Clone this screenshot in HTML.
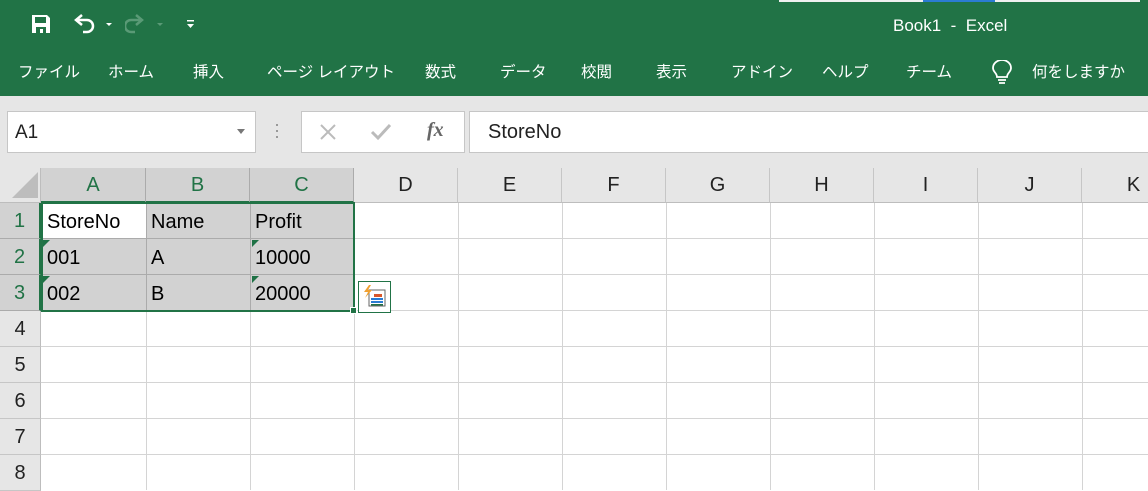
<!DOCTYPE html>
<html><head><meta charset="utf-8"><style>
*{margin:0;padding:0;box-sizing:border-box}
body{width:1148px;height:490px;overflow:hidden;background:#fff;font-family:"Liberation Sans","Noto Sans CJK JP",sans-serif;position:relative}
.a{position:absolute}
.tab{position:absolute;top:60px;color:#fff;font-size:15.5px;white-space:nowrap}
.ch{position:absolute;top:168px;height:35px;background:#e6e6e6;border-right:1px solid #c6c6c6;border-bottom:1px solid #bdbdbd;text-align:center;line-height:35px;font-size:20px;color:#222}
.ch.s{background:#d2d2d2;color:#217346;border-right:1px solid #ababab;border-bottom:2px solid #217346}
.rh{position:absolute;left:0;width:41px;height:36px;background:#e6e6e6;border-right:1px solid #bdbdbd;border-bottom:1px solid #c6c6c6;text-align:center;line-height:36px;font-size:20px;color:#222}
.rh.s{background:#d2d2d2;color:#217346;border-right:2px solid #217346;border-bottom:1px solid #ababab}
.vl{position:absolute;top:203px;width:1px;height:287px;background:#d4d4d4}
.hl{position:absolute;left:41px;height:1px;width:1107px;background:#d4d4d4}
.cell{position:absolute;font-size:20px;color:#000;line-height:36px;padding-left:5px}
.tri{position:absolute;width:0;height:0;border-top:7px solid #1e7145;border-right:7px solid transparent}
</style></head><body>
<div class="a" style="left:0;top:0;width:1148px;height:96px;background:#217346"></div>
<div class="a" style="left:779px;top:0;width:361px;height:2px;background:#f0f0f0"></div>
<div class="a" style="left:923px;top:0;width:72px;height:2px;background:#2b7cd3"></div>
<svg class="a" style="left:31px;top:14px" width="20" height="20" viewBox="0 0 20 20"><path d="M1 1h15l3 3v15H1z" fill="#fff"/><rect x="4" y="3" width="11" height="6" fill="#217346"/><rect x="5" y="13" width="10" height="6" fill="#217346"/><rect x="9" y="15" width="3" height="4" fill="#fff"/></svg>
<svg class="a" style="left:73px;top:14px" width="40" height="22" viewBox="0 0 40 22"><path d="M4 6h10a6 6 0 0 1 0 12h-4" stroke="#fff" stroke-width="2.5" fill="none"/><path d="M9 1L3 6l6 5" stroke="#fff" stroke-width="2.5" fill="none"/><path d="M33 9l3 3 3-3z" fill="#fff"/></svg>
<svg class="a" style="left:125px;top:14px" width="42" height="22" viewBox="0 0 42 22"><path d="M16 6H6a6 6 0 0 0 0 12h4" stroke="#5a9a76" stroke-width="2.5" fill="none"/><path d="M11 1l6 5-6 5" stroke="#5a9a76" stroke-width="2.5" fill="none"/><path d="M32 9l3 3 3-3z" fill="#5a9a76"/></svg>
<svg class="a" style="left:186px;top:19px" width="10" height="12" viewBox="0 0 10 12"><rect x="1" y="1" width="7" height="1.5" fill="#fff"/><path d="M1 5h7l-3.5 4z" fill="#fff"/></svg>
<div class="a" style="left:893px;top:16px;color:#fff;font-size:17px">Book1 &nbsp;-&nbsp; Excel</div>
<div class="tab" style="left:18px">ファイル</div>
<div class="tab" style="left:108px">ホーム</div>
<div class="tab" style="left:193px">挿入</div>
<div class="tab" style="left:267px">ページ レイアウト</div>
<div class="tab" style="left:425px">数式</div>
<div class="tab" style="left:500px">データ</div>
<div class="tab" style="left:581px">校閲</div>
<div class="tab" style="left:656px">表示</div>
<div class="tab" style="left:731px">アドイン</div>
<div class="tab" style="left:822px">ヘルプ</div>
<div class="tab" style="left:906px">チーム</div>
<svg class="a" style="left:991px;top:60px" width="22" height="26" viewBox="0 0 22 26"><path d="M6 17c0-4-4-5-4-9a9 8 0 0 1 18 0c0 4-4 5-4 9z" stroke="#fff" stroke-width="1.8" fill="none"/><path d="M7 20h8M8 23h6" stroke="#fff" stroke-width="1.8"/></svg>
<div class="tab" style="left:1032px">何をしますか</div>
<div class="a" style="left:0;top:96px;width:1148px;height:72px;background:#e6e6e6"></div>
<div class="a" style="left:7px;top:111px;width:249px;height:42px;background:#fff;border:1px solid #c6c6c6"></div>
<div class="a" style="left:15px;top:122px;font-size:19px;color:#222">A1</div>
<div class="a" style="left:237px;top:129px;border-top:5px solid #777;border-left:4px solid transparent;border-right:4px solid transparent"></div>
<div class="a" style="left:276px;top:124px;width:2px;height:2px;background:#999;box-shadow:0 6px #999,0 12px #999"></div>
<div class="a" style="left:301px;top:111px;width:164px;height:42px;background:#fff;border:1px solid #c6c6c6"></div>
<svg class="a" style="left:318px;top:122px" width="20" height="20" viewBox="0 0 20 20"><path d="M3 3l14 14M17 3L3 17" stroke="#bbb" stroke-width="2"/></svg>
<svg class="a" style="left:370px;top:122px" width="22" height="20" viewBox="0 0 22 20"><path d="M2 10l6 6 12-13" stroke="#bbb" stroke-width="3" fill="none"/></svg>
<div class="a" style="left:427px;top:119px;font-family:'Liberation Serif',serif;font-style:italic;font-weight:bold;font-size:20px;color:#666">fx</div>
<div class="a" style="left:469px;top:111px;width:690px;height:42px;background:#fff;border:1px solid #c6c6c6"></div>
<div class="a" style="left:488px;top:121px;font-size:20px;color:#222">StoreNo</div>
<div class="a" style="left:0;top:168px;width:41px;height:35px;background:#e6e6e6;border-right:1px solid #bdbdbd;border-bottom:1px solid #bdbdbd"></div>
<div class="a" style="left:12px;top:172px;border-bottom:26px solid #bdbdbd;border-left:26px solid transparent"></div>
<div class="ch s" style="left:41px;width:105px">A</div>
<div class="ch s" style="left:146px;width:104px">B</div>
<div class="ch s" style="left:250px;width:104px">C</div>
<div class="ch" style="left:354px;width:104px">D</div>
<div class="ch" style="left:458px;width:104px">E</div>
<div class="ch" style="left:562px;width:104px">F</div>
<div class="ch" style="left:666px;width:104px">G</div>
<div class="ch" style="left:770px;width:104px">H</div>
<div class="ch" style="left:874px;width:104px">I</div>
<div class="ch" style="left:978px;width:104px">J</div>
<div class="ch" style="left:1082px;width:104px">K</div>
<div class="rh s" style="top:203px">1</div>
<div class="rh s" style="top:239px">2</div>
<div class="rh s" style="top:275px">3</div>
<div class="rh" style="top:311px">4</div>
<div class="rh" style="top:347px">5</div>
<div class="rh" style="top:383px">6</div>
<div class="rh" style="top:419px">7</div>
<div class="rh" style="top:455px">8</div>
<div class="vl" style="left:146px"></div><div class="vl" style="left:250px"></div><div class="vl" style="left:354px"></div><div class="vl" style="left:458px"></div><div class="vl" style="left:562px"></div><div class="vl" style="left:666px"></div><div class="vl" style="left:770px"></div><div class="vl" style="left:874px"></div><div class="vl" style="left:978px"></div><div class="vl" style="left:1082px"></div>
<div class="hl" style="top:238px"></div><div class="hl" style="top:274px"></div><div class="hl" style="top:310px"></div><div class="hl" style="top:346px"></div><div class="hl" style="top:382px"></div><div class="hl" style="top:418px"></div><div class="hl" style="top:454px"></div>
<div class="a" style="left:41px;top:203px;width:314px;height:108px;background:#d2d2d2"></div>
<div class="a" style="left:42px;top:204px;width:104px;height:35px;background:#fff"></div>
<div class="a" style="left:146px;top:203px;width:1px;height:108px;background:#ababab"></div>
<div class="a" style="left:250px;top:203px;width:1px;height:108px;background:#ababab"></div>
<div class="a" style="left:41px;top:238px;width:314px;height:1px;background:#ababab"></div>
<div class="a" style="left:41px;top:274px;width:314px;height:1px;background:#ababab"></div>
<div class="a" style="left:41px;top:202px;width:314px;height:110px;border:2px solid #217346"></div>
<div class="a" style="left:350px;top:307px;width:7px;height:7px;background:#217346;border:1px solid #fff"></div>
<div class="tri" style="left:43px;top:240px"></div><div class="tri" style="left:43px;top:276px"></div>
<div class="tri" style="left:252px;top:240px"></div><div class="tri" style="left:252px;top:276px"></div>
<div class="cell" style="left:42px;top:204px">StoreNo</div>
<div class="cell" style="left:146px;top:204px">Name</div>
<div class="cell" style="left:250px;top:204px">Profit</div>
<div class="cell" style="left:42px;top:240px">001</div>
<div class="cell" style="left:146px;top:240px">A</div>
<div class="cell" style="left:250px;top:240px">10000</div>
<div class="cell" style="left:42px;top:276px">002</div>
<div class="cell" style="left:146px;top:276px">B</div>
<div class="cell" style="left:250px;top:276px">20000</div>
<div class="a" style="left:358px;top:281px;width:33px;height:32px;background:#fff;border:1px solid #217346"></div>
<svg class="a" style="left:362px;top:285px" width="26" height="24" viewBox="0 0 26 24"><rect x="7" y="5" width="16" height="16" fill="#fff" stroke="#666"/><rect x="12" y="9" width="8" height="3" fill="#d9572b"/><rect x="9" y="13" width="12" height="2" fill="#2b7cd3"/><rect x="9" y="16" width="12" height="2" fill="#2b7cd3"/><rect x="9" y="19" width="12" height="1.5" fill="#217346"/><path d="M7 0L2 7h4l-3 6 7-8H6l3-5z" fill="#f0a030"/></svg>
</body></html>
